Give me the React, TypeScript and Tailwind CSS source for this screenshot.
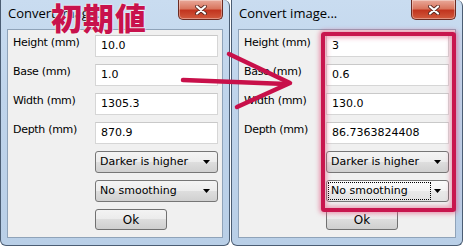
import React from "react";

type Props = {
  values: string[];
  focused?: boolean;
  width: string;
};

const labels = ["Height (mm)", "Base (mm)", "Width (mm)", "Depth (mm)"];

const CloseButton = () => (
  <div className="mr-[6px] flex h-[20px] w-[45px] items-center justify-center self-start rounded-b-[5px] border border-t-0 border-[#6b2b22] bg-[linear-gradient(#e9a99a,#d9765f_45%,#c2351f_55%,#d15a3e)] shadow-[inset_0_0_0_1px_rgba(255,255,255,0.35)]">
    <svg width="12" height="10" viewBox="0 0 12 10">
      <path d="M2 1.5 L10 8.5 M10 1.5 L2 8.5" stroke="#5a2a22" strokeWidth="3.8" strokeLinecap="round" />
      <path d="M2 1.5 L10 8.5 M10 1.5 L2 8.5" stroke="#ffffff" strokeWidth="2.2" strokeLinecap="round" />
    </svg>
  </div>
);

const Combo = ({ text, focused }: { text: string; focused?: boolean }) => (
  <div
    className={
      "flex h-[22px] items-center rounded-[3px] border border-[#767676] pr-[7px] " +
      (focused
        ? "bg-[linear-gradient(#fbfbfb,#f3f3f3_50%,#e9e9e9_50%,#e2e2e2)] pl-[1px]"
        : "bg-[linear-gradient(#f4f4f4,#ececec_50%,#dedede_50%,#d0d0d0)] pl-[4px]")
    }
  >
    {focused ? (
      <span className="flex h-[18px] w-[103px] items-center border border-dotted border-black pl-[2px]">
        {text}
      </span>
    ) : (
      <span>{text}</span>
    )}
    <svg className="ml-auto" width="7" height="4" viewBox="0 0 7 4">
      <path d="M0 0 H7 L3.5 4 Z" fill="#000" />
    </svg>
  </div>
);

const Dialog = ({ values, focused, width }: Props) => (
  <div
    className={
      width +
      " flex h-[246px] flex-col border-x border-b border-[#4b5d73] bg-[linear-gradient(#c9dcf0,#bfd4eb_40%,#b9cfe7)] rounded-b-[6px] rounded-tr-[6px]"
    }
  >
    <div className="flex h-[29px] items-start">
      <div className="pl-[7px] pt-[5px] text-[13px] leading-[17px] text-black [font-family:'Open_Sans',sans-serif]">
        Convert image...
      </div>
      <div className="ml-auto" />
      <CloseButton />
    </div>
    <div className="mx-[6px] mb-[7px] flex-1 border border-[#8fa3b9] bg-[#f0f0f0] pl-[5px] pt-[5px] text-[11px] text-black [font-family:'DejaVu_Sans',sans-serif]">
      <div className="grid grid-cols-[82px_123px] gap-y-[7px]">
        {labels.map((label, i) => (
          <React.Fragment key={label}>
            <div className="flex h-[22px] items-center pb-[5px] tracking-[-0.3px]">{label}</div>
            <div className="flex h-[22px] items-center border border-[#d6d6d6] border-t-[#c9c9c9] bg-white pl-[5px] pt-[1px]">
              {values[i]}
            </div>
          </React.Fragment>
        ))}
        <div />
        <Combo text="Darker is higher" />
        <div />
        <Combo text="No smoothing" focused={focused} />
        <div />
        <div className="flex h-[21px] w-[72px] items-center justify-center rounded-[3px] border border-[#707070] bg-[linear-gradient(#f3f3f3,#ebebeb_50%,#dddddd_50%,#cfcfcf)] text-[12px]">
          Ok
        </div>
      </div>
    </div>
  </div>
);

export default function App() {
  return (
    <div className="relative flex h-[246px] w-[463px] gap-[1px] overflow-hidden bg-white">
      <Dialog width="w-[230px]" values={["10.0", "1.0", "1305.3", "870.9"]} />
      <Dialog width="w-[232px]" values={["3", "0.6", "130.0", "86.7363824408"]} focused />

      {/* annotations */}
      <div className="absolute left-[321px] top-[32px] h-[180px] w-[135px] rounded-[3px] border-[4px] border-[#c8164e] shadow-[0_0_4px_2px_rgba(225,90,130,0.55),inset_0_0_4px_2px_rgba(225,90,130,0.5)]" />
      <svg className="pointer-events-none absolute left-0 top-0" width="463" height="246" viewBox="0 0 463 246">
        <g stroke="#c8104a" strokeWidth="4.5" strokeLinecap="round" strokeLinejoin="round" fill="none">
          <path d="M183 80 L286 84" />
          <path d="M229 54 L290 83 L237 107" />
        </g>
      </svg>
      <div className="absolute left-[51px] top-0 text-[31px] font-black leading-[34px] tracking-[1px] text-[#c8124c] [font-family:'Noto_Sans_CJK_JP',sans-serif] [text-shadow:0_0_1px_#fff,0_0_2px_#fff]">
        初期値
      </div>
    </div>
  );
}
